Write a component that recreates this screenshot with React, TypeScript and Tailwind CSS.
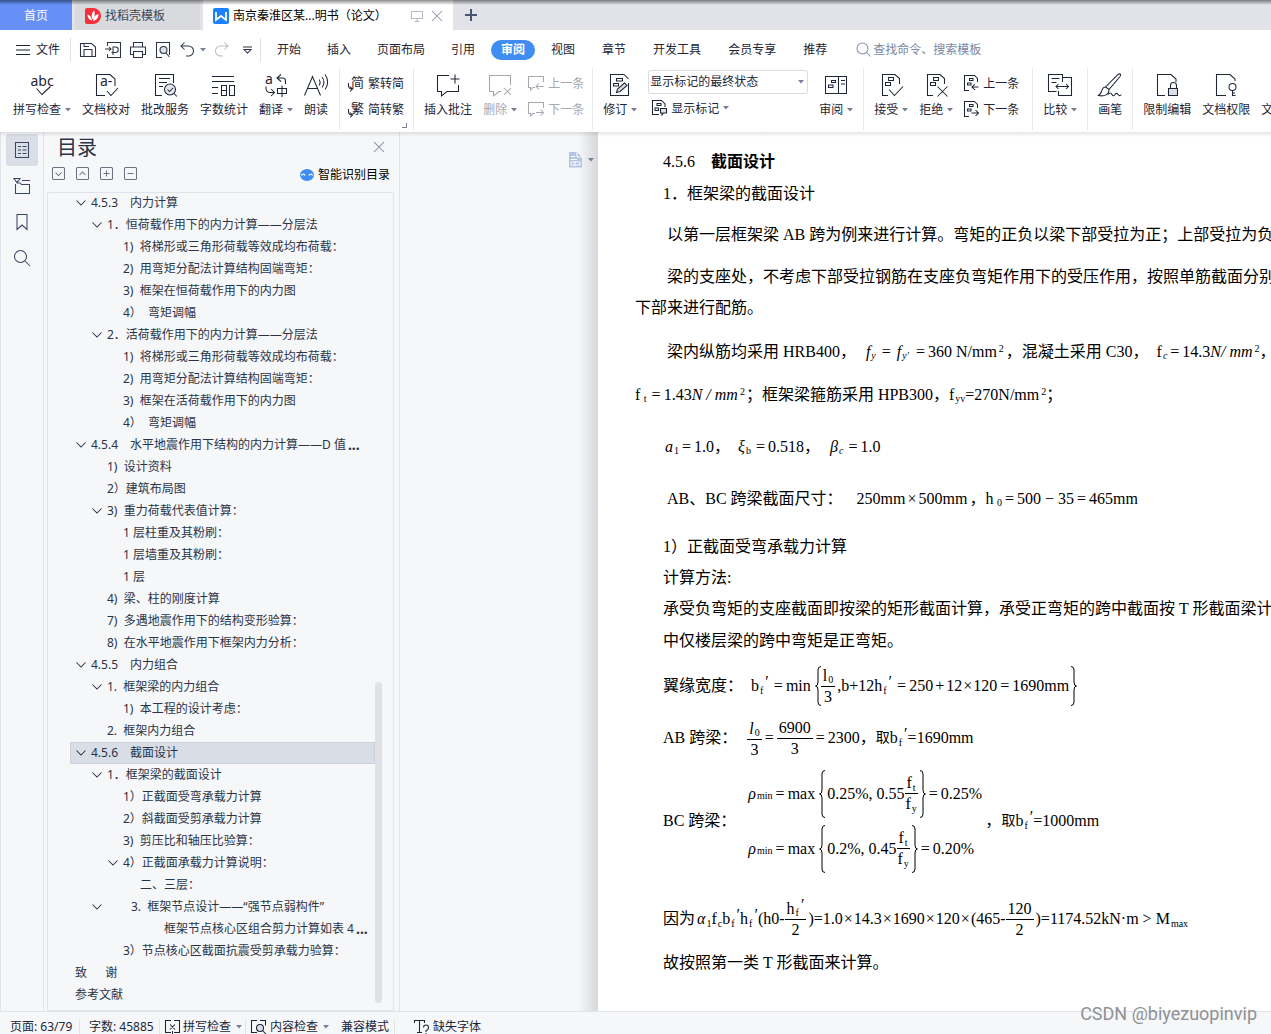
import React from "react";

const UI = "font-['Noto_Sans','Noto_Sans_CJK_SC',sans-serif]";
const SERIF = "font-['Liberation_Serif','Noto_Sans_CJK_SC',serif]";

type Kids = { children?: React.ReactNode };

function Svg({ w = 24, h = 24, className = "", children }: Kids & { w?: number; h?: number; className?: string }) {
  return (
    <svg width={w} height={h} viewBox={`0 0 ${w} ${h}`} fill="none" stroke="currentColor" strokeWidth="1.05" className={`shrink-0 overflow-visible ${className}`} aria-hidden="true">
      {children}
    </svg>
  );
}

function Caret() {
  return (
    <svg width="6" height="4" viewBox="0 0 6 4" className="shrink-0 text-[#77809a]" aria-hidden="true">
      <path d="M0 0h6L3 3.5z" fill="currentColor" />
    </svg>
  );
}

/* ---------- ribbon icons ---------- */

const docShape = "M9 22.5H3.5V1.5H16l4.5 4V11";
const marks = (
  <>
    <path d="M9.500 4.500h5v3h-5z" />
    <path d="M6.500 9.500h5v3h-5z" />
  </>
);

const icons = {
  spell: (
    <Svg>
      <text x="0.500" y="12.500" fontSize="14" fill="currentColor" stroke="none">abc</text>
      <path d="M6.500 15.500l5.500 6 8.500-8" />
    </Svg>
  ),
  proof: (
    <Svg>
      <path d="M11 22.500H2.500V1.500H16l5 4.500V13M13 18l4 4.500 7-7.500" />
      <text x="6" y="13" fontSize="14" fill="currentColor" stroke="none">a-</text>
    </Svg>
  ),
  service: (
    <Svg>
      <path d="M9 22.500H2.500V1.500h18V10M6 5.500h11M6 9.500h8M6 13.500h4" />
      <circle cx="17" cy="16.500" r="5.500" fill="#e3e5ea" />
      <path d="M14.500 16.500l2 2 3.500-3.500M21 20.500l3 3" />
    </Svg>
  ),
  count: (
    <Svg>
      <path d="M0 3.500h22M0 8.500h22M0 14.500h6M0 20.500h6M9.500 12.500h5v10h-5zM9.500 17.500h5M17.500 12.500h5v10h-5z" />
    </Svg>
  ),
  translate: (
    <Svg>
      <text x="1" y="11" fontSize="14" fill="currentColor" stroke="none">a</text>
      <path d="M17 1.500l-4 3.500 4 3.500M13 5h5.500a3 3 0 0 1 3 3v3M2 13.500v2a4 4 0 0 0 4 4h4M7 16l3.500 3.500L7 23M13.500 15.500h9v5h-9zM18 12.500V24" />
    </Svg>
  ),
  read: (
    <Svg>
      <path d="M0.500 22.500L8.500 3.500l8 19M3.500 15.500h10M15 6.500a5 5 0 0 1 0 6M18 4a8 8 0 0 1 0 10.500M21 1.500a12 12 0 0 1 0 15" />
    </Svg>
  ),
  addNote: (
    <Svg>
      <path d="M13 2.500H1.500v16h4V23l5.500-4.500h11.500V12M19 1.500v9M14.500 6h9" />
    </Svg>
  ),
  delNote: (
    <Svg>
      <path d="M13.500 18.500H11L5.500 23v-4.500h-4v-16h21V12M16 15l7 7M23 15l-7 7" />
    </Svg>
  ),
  revise: (
    <Svg>
      <path d="M20.500 10v12.500h-18v-21H16l4.500 4.500" />
      <path d="M8.500 5.500h6v2.500h-6zM5.500 10.500h5v2.500h-5z" />
      <path d="M8.500 19.500l1-3.500L16.500 10l2.500 2.500-7 6z" fill="#dcdfe6" />
    </Svg>
  ),
  review: (
    <Svg>
      <path d="M1.500 3.500h21v17h-21zM14.500 3.500v17M17 7.500h4M17 11h4M7.500 7.500h4v2h-4zM4.500 12h4.500v2.500H4.500z" />
    </Svg>
  ),
  accept: (
    <Svg>
      <path d={docShape} />
      {marks}
      <path d="M10 16.500l5.500 6 8.500-9" />
    </Svg>
  ),
  reject: (
    <Svg>
      <path d={docShape} />
      {marks}
      <path d="M13.500 13.500l10 10M23.500 13.500l-10 10" />
    </Svg>
  ),
  compare: (
    <Svg>
      <path d="M8.500 18.500H0.500v-17h14v3M3.500 5.500h8M3.500 9.500h5M14.500 9V4.500h9v18h-13V18M8 13.500h12.500M10.500 11L8 13.500l2.500 2.500M18 11l2.500 2.500L18 16" />
    </Svg>
  ),
  brush: (
    <Svg>
      <path d="M7.500 14L20 1.500c2-1.500 3.500 0 2 2L11 16.500zM7.500 14c-3 0-3.500 2.500-4 4.500-.5 2-1.500 3-3 4 5 1 10.500 0 10.500-6M10 21.500c2-2 3-2 4 0s2 1.500 3 0 2-1.500 3 0 2 1.500 3.500 0" />
    </Svg>
  ),
  lock: (
    <Svg>
      <path d="M10 22.500H2.500V1.500H16l5 4.500v3" />
      <path d="M15.500 15v-2.500a3 3 0 0 1 6 0V15" />
      <path d="M13.500 15.500h9v7h-9z" fill="#dcdfe6" />
    </Svg>
  ),
  key: (
    <Svg>
      <path d="M12 22.500H2.500V1.500H16l5 4.500v2" />
      <circle cx="18.500" cy="14" r="3.500" />
      <path d="M18.500 17.500V23M18.500 22.500h3M18.500 20h2.500" />
    </Svg>
  ),
};

const notePrev = (
  <Svg w={16} h={16}>
    <path d="M7 12.500H5L2.500 15v-2.500h-2V1.500h15V7M15.500 11.500H8M11 8.500l-3 3 3 3" />
  </Svg>
);
const noteNext = (
  <Svg w={16} h={16}>
    <path d="M7 12.500H5L2.500 15v-2.500h-2V1.500h15V7M8 11.500h7.500M12.500 8.500l3 3-3 3" />
  </Svg>
);
const revPrev = (
  <Svg w={15} h={16}>
    <path d="M5 15.500H.5V.5h10l3 3V7M5.500 3.500h3.500v2H5.500zM3.500 8h3.500v2H3.500zM14.500 12H8M11 9l-3 3 3 3" />
  </Svg>
);
const revNext = (
  <Svg w={15} h={16}>
    <path d="M5 15.500H.5V.5h10l3 3V7M5.500 3.500h3.500v2H5.500zM3.500 8h3.500v2H3.500zM7.500 12h7M11.500 9l3 3-3 3" />
  </Svg>
);
const showMarks = (
  <Svg w={15} h={16}>
    <path d="M7 14.500H.5V.5h9l3.500 3.500v3M5 3.500h4v2H5zM3 8h3.500v2.500H3z" />
    <path d="M8.500 8.500h6v4.500h-3l-1.500 2v-2H8.500z" fill="#dcdfe6" />
  </Svg>
);
function SwapGlyph({ ch }: { ch: string }) {
  return (
    <Svg w={16} h={17}>
      <text x="3" y="12" fontSize="13" fill="currentColor" stroke="none">{ch}</text>
      <path d="M.5 8v2.500q0 3.500 4 3.500M2 11.500L4.500 14 2 16.500" />
    </Svg>
  );
}

function Big({ icon, label, caret, muted }: { icon: React.ReactNode; label: string; caret?: boolean; muted?: boolean }) {
  return (
    <button type="button" className={`flex shrink-0 flex-col items-center gap-1 pt-[5px] ${muted ? "text-[#a5a8ae]" : ""}`}>
      {icon}
      <span className="flex items-center gap-1 leading-[18px] whitespace-nowrap">
        {label}
        {caret && <Caret />}
      </span>
    </button>
  );
}

function Small({ icon, label, caret, muted }: { icon: React.ReactNode; label: string; caret?: boolean; muted?: boolean }) {
  return (
    <button type="button" className={`flex h-[26px] items-center gap-1 whitespace-nowrap ${muted ? "text-[#a5a8ae]" : ""}`}>
      {icon}
      <span className="pt-px">{label}</span>
      {caret && <Caret />}
    </button>
  );
}

function Group({ className = "", children }: Kids & { className?: string }) {
  return <div className={`relative flex shrink-0 items-start border-r border-[#e9eaee] ${className}`}>{children}</div>;
}

function Pair({ children }: Kids) {
  return <div className="flex flex-col pt-0.5">{children}</div>;
}

/* ---------- window chrome ---------- */

function TitleTabs() {
  return (
    <header className="relative flex h-[30px] shrink-0 bg-[#e1e3e8]">
      <button type="button" className="w-[72px] bg-[#6690f8] pt-0.5 text-white">首页</button>
      <button type="button" className="ml-[3px] flex w-[125px] items-center gap-1 bg-[#d9dade] pt-0.5 pl-2.5 text-[#42474f]">
        <svg width="16" height="16" viewBox="0 0 16 16" aria-hidden="true">
          <path d="M2 0h6a8 8 0 0 1 8 8 8 8 0 0 1-8 8H2a2 2 0 0 1-2-2V2a2 2 0 0 1 2-2z" fill="#f5303c" />
          <path d="M9 2.500c1.500 3 1 6-1.500 9-1.500-3.500-1-6.500 1.500-9zM2.500 6.500c2.500.5 4 2.500 4.500 6-3-.5-4.500-3-4.500-6zM13.500 6c0 3.500-1.500 6-5.500 7 0-3.500 2-6 5.500-7z" fill="#fff" />
        </svg>
        找稻壳模板
      </button>
      <div className="ml-[3px] flex w-[250px] items-center bg-white pt-0.5 pl-2.5">
        <svg width="16" height="16" viewBox="0 0 16 16" aria-hidden="true">
          <rect width="16" height="16" rx="2" fill="#1a80fb" />
          <path d="M3 4v8l5-4 5 4V4" fill="none" stroke="#fff" strokeWidth="1.800" />
        </svg>
        <span className="ml-1 w-[178px] whitespace-nowrap text-black">南京秦淮区某...明书（论文）</span>
        <Svg w={12} h={12} className="text-[#b3bacb]">
          <path d="M.5 1.500h11v7H.5zM6 8.500v3M3.500 11.500h5" />
        </Svg>
        <button type="button" aria-label="关闭标签" className="ml-2">
          <Svg w={12} h={12} className="text-[#8d96ad]"><path d="M1 1l10 10M11 1L1 11" /></Svg>
        </button>
      </div>
      <button type="button" aria-label="新建标签" className="ml-3">
        <Svg w={12} h={12} className="text-[#4a5670]"><path d="M6 0v12M0 6h12" strokeWidth="2" /></Svg>
      </button>
      <div className="absolute inset-x-0 top-0 h-[5px] bg-linear-to-b from-black/45 to-transparent" />
    </header>
  );
}

function MenuRow() {
  const tab = "whitespace-nowrap";
  return (
    <nav className="flex h-[38px] shrink-0 items-center overflow-hidden bg-white pt-px">
      <button type="button" className="flex shrink-0 items-center gap-1.5 pl-4">
        <Svg w={14} h={12}><path d="M0 1.500h14M0 6h14M0 10.500h14" /></Svg>
        文件
      </button>
      <span className="ml-2.5 h-6 w-px shrink-0 bg-[#dfe1e6]" />
      <div className="flex w-[189px] shrink-0 items-center pl-[9px] text-[#2c3546]">
        <button type="button" aria-label="保存"><Svg w={16} h={16}><path d="M.5 1.500h11l4 3.500v9.500H.5zM4 14V7.500h8V14M4 1.500v3h5" /></Svg></button>
        <button type="button" aria-label="输出为PDF" className="ml-[9px]"><Svg w={16} h={16}><path d="M2.500 4V.5h13v15h-13V12M0 7h6M4 5l2 2-2 2M8 13V5h2.500a2 2 0 0 1 0 5.500H6.500" /></Svg></button>
        <button type="button" aria-label="打印" className="ml-[9px]"><Svg w={16} h={16}><path d="M3.500 5V.5h9V5M3.500 12.500h-3V5h15v7.500h-3M3.500 9.500h9v6h-9z" /></Svg></button>
        <button type="button" aria-label="打印预览" className="ml-[9px]"><Svg w={16} h={16}><path d="M7 15.500H1.500V.5h13V13" /><circle cx="8.500" cy="8" r="3.500" fill="#dcdfe6" /><path d="M11 11l3.500 4" /></Svg></button>
        <button type="button" aria-label="撤销" className="ml-[9px] flex items-center gap-1.5"><Svg w={14} h={15}><path d="M4.500.5L1 4l3.500 3.500M1 4h7.500a5 5 0 0 1 0 10H6" /></Svg><Caret /></button>
        <button type="button" aria-label="恢复" className="ml-[9px] text-[#b9bcc3]"><Svg w={14} h={15}><path d="M9.500.5L13 4 9.500 7.500M13 4H5.500a5 5 0 0 0 0 10H8" /></Svg></button>
        <button type="button" aria-label="更多" className="ml-3.5"><Svg w={9} h={8}><path d="M0 1h9M1 3.500h7L4.500 7z" /></Svg></button>
      </div>
      <span className="h-6 w-px shrink-0 bg-[#dfe1e6]" />
      <div className="flex shrink-0 items-center gap-[26px] pl-4">
        <button type="button" className={tab}>开始</button>
        <button type="button" className={tab}>插入</button>
        <button type="button" className={tab}>页面布局</button>
        <button type="button" className={tab}>引用</button>
      </div>
      <button type="button" className="mx-4 h-5 w-11 shrink-0 rounded-full bg-[#3f8cf2] font-bold text-white">审阅</button>
      <div className="flex shrink-0 items-center gap-[27px]">
        <button type="button" className={tab}>视图</button>
        <button type="button" className={tab}>章节</button>
        <button type="button" className={tab}>开发工具</button>
        <button type="button" className={tab}>会员专享</button>
        <button type="button" className={tab}>推荐</button>
      </div>
      <label className="ml-[29px] flex shrink-0 items-center gap-0.5 text-[#8590ab]">
        <Svg w={15} h={15}><circle cx="6.500" cy="6.500" r="5.500" /><path d="M10.500 10.500l4 4" /></Svg>
        <input type="text" aria-label="查找命令、搜索模板" placeholder="查找命令、搜索模板" className="w-[130px] bg-transparent outline-none placeholder:text-[#7a86a2]" />
      </label>
    </nav>
  );
}

function Ribbon() {
  return (
    <div className="flex h-16 shrink-0 overflow-hidden bg-white pb-0.5">
      <Group className="gap-[11px] pr-[11px] pl-[13px]">
        <Big icon={icons.spell} label="拼写检查" caret />
        <Big icon={icons.proof} label="文档校对" />
        <Big icon={icons.service} label="批改服务" />
        <Big icon={icons.count} label="字数统计" />
        <Big icon={icons.translate} label="翻译" caret />
        <Big icon={icons.read} label="朗读" />
      </Group>
      <Group className="pr-[9px] pl-2">
        <Pair>
          <Small icon={<SwapGlyph ch="简" />} label="繁转简" />
          <Small icon={<SwapGlyph ch="繁" />} label="简转繁" />
        </Pair>
        <svg width="5" height="5" viewBox="0 0 5 5" className="absolute right-1.5 bottom-0.5 text-[#77809a]" aria-hidden="true">
          <path d="M4.500 0v4.500H0" fill="none" stroke="currentColor" />
        </svg>
      </Group>
      <Group className="gap-[11px] pr-2 pl-2.5">
        <Big icon={icons.addNote} label="插入批注" />
        <Big icon={icons.delNote} label="删除" caret muted />
        <Pair>
          <Small icon={notePrev} label="上一条" muted />
          <Small icon={noteNext} label="下一条" muted />
        </Pair>
      </Group>
      <Group className="gap-[11px] px-2.5">
        <Big icon={icons.revise} label="修订" caret />
        <div className="w-[160px]">
          <div className="relative mt-0.5">
            <select aria-label="显示标记状态" className="h-6 w-full appearance-none rounded-xs border border-[#dcdee3] bg-white pl-px outline-none">
              <option>显示标记的最终状态</option>
            </select>
            <span className="pointer-events-none absolute top-2.5 right-1"><Caret /></span>
          </div>
          <div className="pt-px pl-1"><Small icon={showMarks} label="显示标记" caret /></div>
        </div>
        <Big icon={icons.review} label="审阅" caret />
      </Group>
      <Group className="gap-[11px] pr-[13px] pl-2.5">
        <Big icon={icons.accept} label="接受" caret />
        <Big icon={icons.reject} label="拒绝" caret />
        <Pair>
          <Small icon={revPrev} label="上一条" />
          <Small icon={revNext} label="下一条" />
        </Pair>
      </Group>
      <Group className="px-2.5"><Big icon={icons.compare} label="比较" caret /></Group>
      <Group className="px-2.5"><Big icon={icons.brush} label="画笔" /></Group>
      <div className="flex shrink-0 items-start gap-[11px] pl-2.5">
        <Big icon={icons.lock} label="限制编辑" />
        <Big icon={icons.key} label="文档权限" />
        <Big icon={<span className="h-6" />} label="文" />
      </div>
    </div>
  );
}

/* ---------- side rail and outline ---------- */

function Rail() {
  const cell = "flex size-8 items-center justify-center rounded-xs";
  return (
    <div className="flex w-11 shrink-0 flex-col items-center gap-1 border-x border-[#e1e4ec] pt-0.5 text-[#3a4663]">
      <button type="button" aria-label="目录" className={`${cell} bg-[#dadee6]`}>
        <Svg w={16} h={18}><path d="M1.500 1.500h13v15h-13zM4 5.500h3M8.500 5.500h4M4 9h3M8.500 9h4M4 12.500h3M8.500 12.500h4" /></Svg>
      </button>
      <button type="button" aria-label="章节" className={cell}>
        <Svg w={16} h={16}><path d="M0 .5h6L3 4.500zM8 2.500h8M1.500 6v9.500h14v-9h-8l-1.500-1.500h-3" /></Svg>
      </button>
      <button type="button" aria-label="书签" className={cell}>
        <Svg w={12} h={18}><path d="M1 1.500h10v15l-5-4.500-5 4.500z" /></Svg>
      </button>
      <button type="button" aria-label="查找" className={cell}>
        <Svg w={18} h={18}><circle cx="7.500" cy="7.500" r="6" /><path d="M12 12l5 5" /></Svg>
      </button>
    </div>
  );
}

const OUTLINE: [number, boolean, string][] = [
  [1, true, "4.5.3　内力计算"],
  [2, true, "1．恒荷载作用下的内力计算——分层法"],
  [3, false, "1)  将梯形或三角形荷载等效成均布荷载："],
  [3, false, "2)  用弯矩分配法计算结构固端弯矩："],
  [3, false, "3)  框架在恒荷载作用下的内力图"],
  [3, false, "4）  弯矩调幅"],
  [2, true, "2．活荷载作用下的内力计算——分层法"],
  [3, false, "1)  将梯形或三角形荷载等效成均布荷载："],
  [3, false, "2)  用弯矩分配法计算结构固端弯矩："],
  [3, false, "3)  框架在活荷载作用下的内力图"],
  [3, false, "4）  弯矩调幅"],
  [1, true, "4.5.4　水平地震作用下结构的内力计算——D 值..."],
  [2, false, "1)  设计资料"],
  [2, false, "2）建筑布局图"],
  [2, true, "3)  重力荷载代表值计算："],
  [3, false, "1 层柱重及其粉刷："],
  [3, false, "1 层墙重及其粉刷："],
  [3, false, "1 层"],
  [2, false, "4)  梁、柱的刚度计算"],
  [2, false, "7)  多遇地震作用下的结构变形验算："],
  [2, false, "8)  在水平地震作用下框架内力分析："],
  [1, true, "4.5.5　内力组合"],
  [2, true, "1.  框架梁的内力组合"],
  [3, false, "1)  本工程的设计考虑："],
  [2, false, "2.  框架内力组合"],
  [1, true, "4.5.6　截面设计"],
  [2, true, "1．框架梁的截面设计"],
  [3, false, "1）正截面受弯承载力计算"],
  [3, false, "2）斜截面受剪承载力计算"],
  [3, false, "3)  剪压比和轴压比验算："],
  [3, true, "4）正截面承载力计算说明："],
  [4, false, "二、三层："],
  [2, true, "　　3.  框架节点设计——“强节点弱构件”"],
  [4, false, "　　框架节点核心区组合剪力计算如表 4..."],
  [3, false, "3）节点核心区截面抗震受剪承载力验算："],
  [0, false, "致　  谢"],
  [0, false, "参考文献"],
];

const INDENT = ["pl-1", "pl-1", "pl-5", "pl-9", "pl-[53px]"];
const SELECTED = 25;

function OutlinePanel() {
  const toolIcons: [string, string][] = [
    ["展开", "M3.500 5.500l3 3 3-3"],
    ["收起", "M3.500 8l3-3 3 3"],
    ["增加", "M6.500 3.500v6M3.500 6.500h6"],
    ["减少", "M3.500 6.500h6"],
  ];
  return (
    <aside className="flex w-[356px] shrink-0 flex-col border-r border-[#e1e4ec] pr-[5px] pl-[3px] text-[#2b3446]">
      <div className="flex h-[30px] shrink-0 items-center justify-between px-2.5">
        <h2 className="pt-0.5 text-xl leading-[30px]">目录</h2>
        <button type="button" aria-label="关闭目录">
          <Svg w={10} h={10} className="text-[#8088a0]"><path d="M0 0l10 10M10 0L0 10" /></Svg>
        </button>
      </div>
      <div className="flex h-[23px] shrink-0 items-center pr-1 pl-[5px]">
        <div className="flex gap-[11px] text-[#6b7280]">
          {toolIcons.map(([name, d]) => (
            <button key={name} type="button" aria-label={name}>
              <Svg w={13} h={13}><rect x=".5" y=".5" width="12" height="12" rx="1" /><path d={d} /></Svg>
            </button>
          ))}
        </div>
        <button type="button" className="ml-auto flex items-center gap-1 pt-0.5 text-black">
          <svg width="14" height="12" viewBox="0 0 14 12" aria-hidden="true">
            <ellipse cx="7" cy="6" rx="7" ry="6" fill="#3f8cf2" />
            <path d="M1.500 6.500a1.800 1.800 0 0 1 3.500 0M9 6.500a1.800 1.800 0 0 1 3.500 0" fill="none" stroke="#fff" strokeWidth="1.200" />
          </svg>
          智能识别目录
        </button>
      </div>
      <div className="relative mt-[7px] min-h-0 flex-1 overflow-hidden rounded-xs border border-[#e0e3eb] pr-[18px] pl-[22px]">
        <ul className="-mt-px">
          {OUTLINE.map(([level, open, text], i) => {
            const cut = text.endsWith("...");
            return (
              <li key={i}>
                <button
                  type="button"
                  className={`flex h-[22px] w-full items-center border text-left whitespace-pre ${INDENT[level]} ${i === SELECTED ? "border-[#ccd2dc] bg-[#d9dde6]" : "border-transparent"}`}
                >
                  {level > 0 && (
                    <span className="w-4 shrink-0">
                      {open && <Svg w={10} h={10} className="ml-px"><path d="M.5 2.500L5 7l4.500-4.500" /></Svg>}
                    </span>
                  )}
                  {cut ? text.slice(0, -3) : text}
                  {cut && <b className="ml-0.5 text-sm leading-4">...</b>}
                </button>
              </li>
            );
          })}
        </ul>
        <div className="absolute right-[11px] bottom-[7px] h-[321px] w-[7px] rounded-full bg-[#dfe1e5]" />
      </div>
    </aside>
  );
}

/* ---------- document ---------- */

function Frac({ n, d }: { n: React.ReactNode; d: React.ReactNode }) {
  return (
    <span className="inline-flex flex-col items-center leading-[20px]">
      <span className="self-stretch border-b border-black px-0.5 text-center">{n}</span>
      <span>{d}</span>
    </span>
  );
}

function Brace({ right, tall }: { right?: boolean; tall?: boolean }) {
  const d = tall
    ? "M6 .5Q3 .5 3 4V20Q3 24 .5 24Q3 24 3 28V44Q3 47.500 6 47.500"
    : "M6 .5Q3 .5 3 4V16Q3 20 .5 20Q3 20 3 24V36Q3 39.500 6 39.500";
  return (
    <svg width="6" height={tall ? 48 : 40} viewBox={tall ? "0 0 6 48" : "0 0 6 40"} className={`shrink-0 ${right ? "ml-0.5 -scale-x-100" : ""}`} aria-hidden="true">
      <path d={d} fill="none" stroke="#000" />
    </svg>
  );
}

const Sub = ({ children }: Kids) => <sub className="ml-px text-[10px]">{children}</sub>;
const Sup = ({ children }: Kids) => <sup className="ml-0.5 text-[10px]">{children}</sup>;
const Prime = () => <span className="relative -top-1 ml-0.5">′</span>;
const Eq = () => <span className="mx-[3px]">=</span>;
const Times = () => <span className="mx-px">×</span>;

function Line({ className = "", children }: Kids & { className?: string }) {
  return <div className={`flex min-h-[31px] items-center whitespace-pre ${className}`}>{children}</div>;
}

function Paper() {
  return (
    <article className={`min-w-0 flex-1 overflow-hidden bg-white pt-[14px] pl-[37px] text-base text-black ${SERIF}`}>
      <Line className="pl-7"><h3>4.5.6　<b>截面设计</b></h3></Line>
      <Line className="mt-px pl-7">1．框架梁的截面设计</Line>
      <Line className="mt-2.5 pl-8">以第一层框架梁 AB 跨为例来进行计算。弯矩的正负以梁下部受拉为正；上部受拉为负</Line>
      <Line className="mt-[11px] pl-8">梁的支座处，不考虑下部受拉钢筋在支座负弯矩作用下的受压作用，按照单筋截面分别</Line>
      <Line>下部来进行配筋。</Line>
      <Line className="mt-[13px] pl-8">
        梁内纵筋均采用 HRB400，
        <span className="ml-2.5"><i>f</i><Sub><i>y</i></Sub></span>
        <span className="ml-[3px]"><Eq /></span>
        <span className="ml-[3px]"><i>f</i><Sub><i>y′</i></Sub></span>
        <span className="ml-1"><Eq />360 N/mm<Sup>2</Sup></span>
        <span className="ml-0.5">，混凝土采用 C30，</span>
        <span className="ml-2">f<Sub><i>c</i></Sub></span>
        <span><Eq />14.3<i>N/ mm</i><Sup>2</Sup>，</span>
      </Line>
      <Line className="mt-3">
        <span>f<Sub> t</Sub></span>
        <span className="ml-0.5"><Eq />1.43<i>N / mm</i><Sup>2</Sup></span>
        <span className="ml-px">；框架梁箍筋采用 HPB300，f<Sub>yv</Sub>=270N/mm<Sup>2</Sup>；</span>
      </Line>
      <Line className="mt-[21px] pl-[30px]">
        <span><i>a</i><Sub>1</Sub></span>
        <span><Eq />1.0，</span>
        <span className="ml-2"><i>ξ</i><Sub>b</Sub></span>
        <span className="ml-0.5"><Eq />0.518，</span>
        <span className="ml-2.5"><i>β</i><Sub><i>c</i></Sub></span>
        <span className="ml-0.5"><Eq />1.0</span>
      </Line>
      <Line className="mt-[21px] pl-8">
        AB、BC 跨梁截面尺寸：
        <span className="ml-3.5">250mm</span>
        <span className="mx-0.5">×</span>
        <span>500mm</span>
        <span className="ml-0.5">，</span>
        <span>h<Sub> 0</Sub></span>
        <span><Eq />500 − 35<Eq />465mm</span>
      </Line>
      <Line className="mt-[17px] pl-7">1）正截面受弯承载力计算</Line>
      <Line className="pl-7">计算方法:</Line>
      <Line className="pl-7">承受负弯矩的支座截面即按梁的矩形截面计算，承受正弯矩的跨中截面按 T 形截面梁计</Line>
      <Line className="mt-px pl-7">中仅楼层梁的跨中弯矩是正弯矩。</Line>
      <Line className="mt-[9px] h-[42px] pl-7">
        翼缘宽度：
        <span className="ml-2">b<Sub>f</Sub><Prime /></span>
        <span className="ml-0.5"><Eq />min</span>
        <span className="ml-1"><Brace /></span>
        <Frac n={<>l<Sub>0</Sub></>} d="3" />
        <span className="ml-0.5">,b+12h<Sub>f</Sub><Prime /></span>
        <span className="ml-0.5"><Eq />250<span className="mx-0.5">+</span>12<Times />120<Eq />1690mm</span>
        <Brace right />
      </Line>
      <Line className="mt-2.5 h-[42px] pl-7">
        AB 跨梁：
        <span className="ml-2.5"><Frac n={<><i>l</i><Sub>0</Sub></>} d="3" /></span>
        <Eq />
        <Frac n="6900" d="3" />
        <Eq />2300，
        <span className="text-sm">取</span>
        <span>b<Sub>f</Sub><Prime />=1690mm</span>
      </Line>
      <Line className="mt-[7px] pl-7">
        BC 跨梁：
        <span className="ml-3 flex w-[237px] flex-col">
          <span className="flex h-[55px] items-center">
            <i>ρ</i><Sub>min</Sub><Eq />max
            <span className="mr-0.5 ml-1"><Brace tall /></span>
            0.25%, 0.55<Frac n={<>f<Sub>t</Sub></>} d={<>f<Sub>y</Sub></>} />
            <Brace right tall /><Eq />0.25%
          </span>
          <span className="flex h-[55px] items-center">
            <i>ρ</i><Sub>min</Sub><Eq />max
            <span className="mr-0.5 ml-1"><Brace tall /></span>
            0.2%, 0.45<Frac n={<>f<Sub>t</Sub></>} d={<>f<Sub>y</Sub></>} />
            <Brace right tall /><Eq />0.20%
          </span>
        </span>
        ，<span className="text-sm">取</span>
        <span>b<Sub>f</Sub><Prime />=1000mm</span>
      </Line>
      <Line className="mt-[22px] h-[42px] pl-7">
        因为
        <span className="ml-0.5"><i>α</i><Sub>1</Sub>f<Sub>c</Sub>b<Sub>f</Sub><Prime />h<Sub>f</Sub><Prime />(h0-</span>
        <Frac n={<>h<Sub>f</Sub><Prime /></>} d="2" />
        <span className="ml-0.5">)=1.0<Times />14.3<Times />1690<Times />120<Times />(465-</span>
        <Frac n="120" d="2" />
        <span className="ml-0.5">)=1174.52kN·m &gt; M<Sub>max</Sub></span>
      </Line>
      <Line className="mt-[7px] pl-7">故按照第一类 T 形截面来计算。</Line>
    </article>
  );
}

function StatusBar() {
  return (
    <footer className="flex h-[23px] shrink-0 items-end overflow-hidden border-t border-[#e1e3ea] bg-[#f6f7f9] pl-2.5 leading-[15px] whitespace-nowrap">
      <span className="w-[70px] border-r border-[#e1e3ea]">页面: 63/79</span>
      <span className="w-[80px] border-r border-[#e1e3ea] pl-[9px]">字数: 45885</span>
      <button type="button" className="flex w-[86px] items-center gap-[3px] border-r border-[#e1e3ea] pl-[5px]">
        <Svg w={15} h={14}><path d="M6 12.500H.5V.5H6M9 .5h5.500v12H9M7.500 11v3M5 4.500l5 5M10 4.500l-5 5" /></Svg>
        拼写检查
        <span className="ml-0.5"><Caret /></span>
      </button>
      <button type="button" className="flex w-[95px] items-center gap-[3px] pl-[5px]">
        <Svg w={16} h={14}><path d="M6 12.500H.5V.5H6M9 .5h5.500v5" /><circle cx="9" cy="8" r="3.500" fill="#dcdfe6" /><path d="M11.500 10.500l3.500 3.500" /></Svg>
        内容检查
        <span className="ml-0.5"><Caret /></span>
      </button>
      <button type="button" className="w-[54px] border-r border-[#e1e3ea] text-left">兼容模式</button>
      <button type="button" className="flex items-center gap-1 pl-[19px]">
        <Svg w={15} h={14}><path d="M.5 3V.5h10V3M5.500.5v12M3 12.500h5M9.500 7.500q0-2.500 2.500-2.500t2.500 2.500-2.500 3V12M12 13v1" /></Svg>
        缺失字体
      </button>
    </footer>
  );
}

export default function App() {
  return (
    <div className={`relative flex h-screen flex-col overflow-hidden bg-[#f6f7f9] text-xs text-[#1d2536] ${UI}`}>
      <TitleTabs />
      <MenuRow />
      <Ribbon />
      <main className="relative flex min-h-0 flex-1">
        <Rail />
        <OutlinePanel />
        <div className="flex w-[198px] shrink-0 items-start justify-end bg-linear-to-l from-[#d6d7da] to-[#f6f7f9] to-10% pt-5 pr-1">
          <button type="button" aria-label="段落布局" className="flex items-center gap-[5px] text-[#a9aeb8]">
            <svg width="14" height="16" viewBox="0 0 14 16" aria-hidden="true">
              <path d="M0 0h8l5 5v10.500H0z" fill="#b4c4e3" />
              <path d="M8 0v5h5M2 4.500h4M2 7.500h6M2 10h9v3H2zM6 9v5" fill="none" stroke="#fff" />
            </svg>
            <Caret />
          </button>
        </div>
        <Paper />
        <div className="pointer-events-none absolute inset-x-0 top-0 h-[5px] bg-linear-to-b from-black/10 to-transparent" />
      </main>
      <StatusBar />
      <div className="pointer-events-none absolute right-[14px] bottom-2 font-['Roboto',sans-serif] text-lg leading-6 text-[#8f9194]">CSDN @biyezuopinvip</div>
    </div>
  );
}
